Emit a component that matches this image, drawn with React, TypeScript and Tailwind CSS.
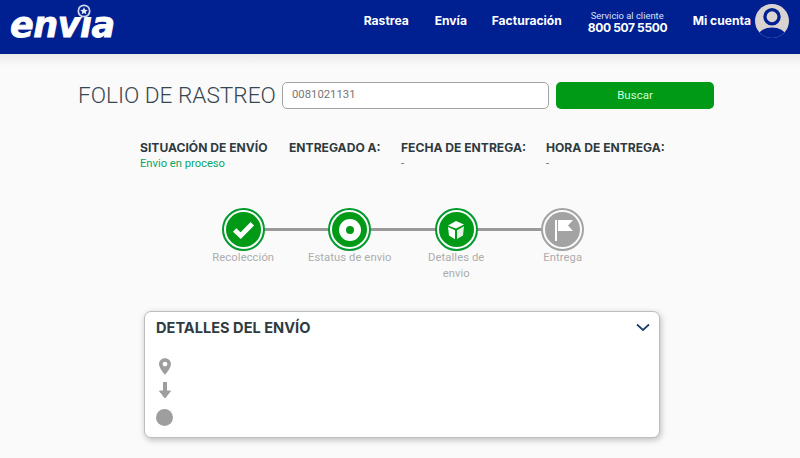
import React from "react";

const mont = "font-['Inter','Noto_Sans',sans-serif]";
const robo = "font-['Roboto',sans-serif]";

function Ring({ active, children }: { active: boolean; children: React.ReactNode }) {
  return (
    <div className={`relative z-10 flex h-[43px] w-[43px] items-center justify-center rounded-full border-2 bg-[#fafafa] ${active ? "border-[#009a2e]" : "border-[#a3a3a3]"}`}>
      <div className={`flex h-[35px] w-[35px] items-center justify-center rounded-full ${active ? "bg-[#009a17]" : "bg-[#a3a3a3]"}`}>{children}</div>
    </div>
  );
}

function Step({ label, active, line, children }: { label: React.ReactNode; active: boolean; line?: boolean; children: React.ReactNode }) {
  return (
    <div className="relative flex w-[106.5px] flex-col items-center">
      {line && <div className="absolute left-[53px] top-[20px] h-[3px] w-[106px] bg-[#9a9a9a]" />}
      <Ring active={active}>{children}</Ring>
      <div className={`mt-[-1px] w-[96px] text-center text-[11.2px] leading-[16px] tracking-[0.1px] text-[#adadad] ${robo}`}>{label}</div>
    </div>
  );
}

function Info({ title, value, width, green }: { title: string; value: string; width: string; green?: boolean }) {
  return (
    <div className={`${width} shrink-0`}>
      <div className={`whitespace-nowrap text-[12.1px] font-bold leading-[16px] text-[#2f3b3f] ${mont}`}>{title}</div>
      <div className={`text-[11.2px] leading-[16px] ${green ? "text-[#0aa565]" : "text-[#666]"} ${robo}`}>{value}</div>
    </div>
  );
}

export default function App() {
  return (
    <div className="h-[458px] w-[800px] overflow-hidden bg-[#fafafa]">
      <header className="flex h-[54px] items-start bg-[#002092] text-white">
        <div className="relative ml-[10px] w-[106px] pt-[11px]">
          <span className="block font-['DejaVu_Sans',sans-serif] text-[35px] font-bold italic leading-[28px] tracking-[-0.5px] [-webkit-text-stroke:0.8px_white]">envia</span>
          <div className="absolute left-[62px] top-[6px] h-[11px] w-[22px] bg-[#002092]" />
          <svg className="absolute left-[67px] top-[4px]" width="14" height="14" viewBox="0 0 16 16">
            <circle cx="8" cy="8" r="7.500" fill="#cfd6ea" />
            <circle cx="8" cy="8" r="5.500" fill="#002092" />
            <path d="M8 3.600l1.300 2.900 3 .3-2.300 2 .7 3L8 10.300l-2.700 1.500.7-3-2.300-2 3-.3z" fill="#e8ecf7" />
          </svg>
        </div>
        <nav className={`ml-auto flex h-[42px] items-center text-[12.1px] font-bold ${mont}`}>
          <span className="w-[71px]">Rastrea</span>
          <span className="w-[57px]">Envía</span>
          <span className="w-[96px]">Facturación</span>
          <div className="mt-[3px] w-[105px] pr-[26px] text-center">
            <div className={`text-[9.4px] font-normal leading-[11px] text-[#d8e2ff] ${robo}`}>Servicio al cliente</div>
            <div className="whitespace-nowrap text-[12px] leading-[14px] tracking-[-0.35px]">800 507 5500</div>
          </div>
          <span>Mi cuenta</span>
        </nav>
        <svg className="ml-[4px] mr-[11px] mt-[4px]" width="34" height="34" viewBox="0 0 36 36">
          <defs><clipPath id="c"><circle cx="18" cy="18" r="18" /></clipPath></defs>
          <circle cx="18" cy="18" r="18" fill="#d9d4d2" />
          <g clipPath="url(#c)">
            <ellipse cx="18" cy="33" rx="14" ry="8" fill="#002092" />
            <circle cx="18" cy="13.500" r="7.500" fill="none" stroke="#002092" strokeWidth="3.500" />
          </g>
        </svg>
      </header>
      <main className="bg-gradient-to-b from-[#e9e9e9] to-[#fafafa] to-[12px]">
        <div className="flex items-center pl-[78px] pt-[28px]">
          <h1 className={`w-[204px] shrink-0 whitespace-nowrap text-[22.6px] font-light leading-[27px] text-[#37474f] ${robo}`}>FOLIO DE RASTREO</h1>
          <div className={`flex h-[27px] w-[267px] items-center rounded-[5px] border border-[#a3a3a3] bg-white pl-[9px] text-[11.3px] text-[#757575] ${robo}`}>0081021131</div>
          <button className={`ml-[7px] h-[27px] w-[158px] rounded-[5px] bg-[#009a17] text-[11.5px] text-[#c8ffd8] ${robo}`}>Buscar</button>
        </div>
        <div className="mt-[31px] flex pl-[140px]">
          <Info title="SITUACIÓN DE ENVÍO" value="Envio en proceso" width="w-[149px]" green />
          <Info title="ENTREGADO A:" value="" width="w-[112px]" />
          <Info title="FECHA DE ENTREGA:" value="-" width="w-[145px]" />
          <Info title="HORA DE ENTREGA:" value="-" width="w-[120px]" />
        </div>
        <div className="mt-[36px] flex pl-[190px]">
          <Step label="Recolección" active line>
            <svg width="25" height="25" viewBox="0 0 24 24"><path d="M3.500 12.500l5.800 5.500L20.500 6.500" fill="none" stroke="#fff" strokeWidth="4.600" /></svg>
          </Step>
          <Step label={<span className="whitespace-nowrap">Estatus de envio</span>} active line>
            <svg width="24" height="24" viewBox="0 0 24 24"><circle cx="12" cy="12" r="7.500" fill="none" stroke="#fff" strokeWidth="7" /></svg>
          </Step>
          <Step label={<>Detalles de<br />envio</>} active line>
            <svg width="24" height="24" viewBox="0 0 24 24">
              <path d="M4 7.500l8-4.500 8 3.500-8 4z" fill="#fff" />
              <path d="M4 9l7 3.200v9L5 17.500z" fill="#fff" />
              <path d="M13 12.200l7-4-1 9.300-6 3.500z" fill="#dff2df" />
            </svg>
          </Step>
          <Step label="Entrega" active={false}>
            <svg width="26" height="26" viewBox="0 0 26 26">
              <path d="M5 3h2v21H5z" fill="#fff" />
              <path d="M8 3h15l-5 5.500 5 5.500H8z" fill="#fff" />
            </svg>
          </Step>
        </div>
      </main>
      <section className="ml-[144px] mt-[29px] h-[127px] w-[516px] rounded-[7px] border border-[#bdbdbd] bg-white px-[11px] shadow-[1px_2px_6px_rgba(0,0,0,0.25)]">
        <div className="flex items-center justify-between pt-[6px]">
          <h2 className={`text-[14.6px] font-bold leading-[20px] text-[#2f3b3f] ${mont}`}>DETALLES DEL ENVÍO</h2>
          <svg className="mb-[2px] mr-[-2px]" width="14" height="9" viewBox="0 0 14 9"><path d="M1 1.500l6 5.500 6-5.500" fill="none" stroke="#1f3f6e" strokeWidth="1.700" /></svg>
        </div>
        <div className="mt-[20px] flex w-[17px] flex-col items-center">
          <svg width="12" height="17" viewBox="0 0 13 18"><path fillRule="evenodd" d="M6.500 0C2.900 0 0 2.800 0 6.300 0 10.700 6.500 18 6.500 18S13 10.700 13 6.300C13 2.800 10.100 0 6.500 0zm0 3.800a2.600 2.600 0 110 5.200 2.600 2.600 0 010-5.200z" fill="#9e9e9e" /></svg>
          <svg className="mt-[7px]" width="12" height="16" viewBox="0 0 12 16"><path d="M4.500 0h3v9H11.500L6 16 .5 9H4.500z" fill="#9e9e9e" stroke="#9e9e9e" strokeLinejoin="round" /></svg>
          <div className="mt-[11px] h-[17px] w-[17px] rounded-full bg-[#9e9e9e]" />
        </div>
      </section>
    </div>
  );
}
